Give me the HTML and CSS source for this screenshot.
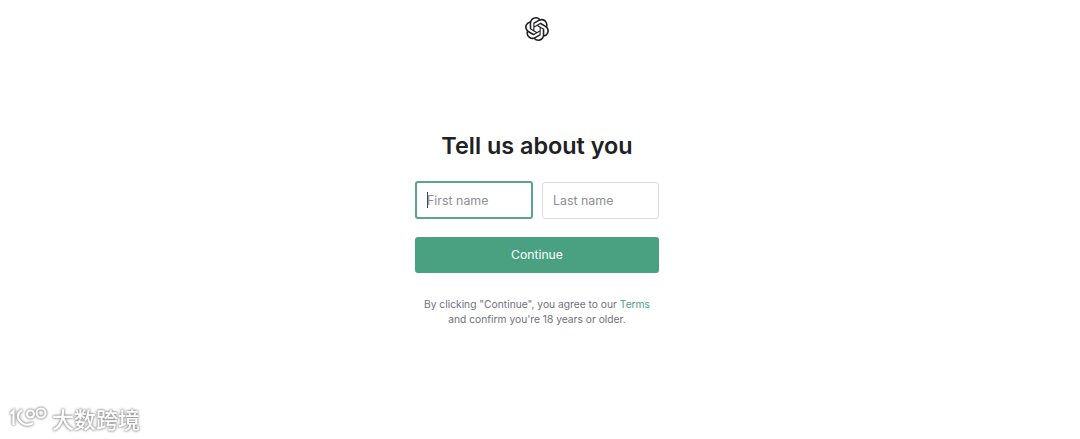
FILE: index.html
```html
<!DOCTYPE html>
<html lang="en">
<head>
<meta charset="utf-8">
<title>Tell us about you</title>
<link rel="stylesheet" href="styles.css">
</head>
<body>
<main class="page">
  <svg class="logo" viewBox="0 0 24 24" aria-label="OpenAI"><path d="M22.2819 9.8211a5.9847 5.9847 0 0 0-.5157-4.9108 6.0462 6.0462 0 0 0-6.5098-2.9A6.0651 6.0651 0 0 0 4.9807 4.1818a5.9847 5.9847 0 0 0-3.9977 2.9 6.0462 6.0462 0 0 0 .7427 7.0966 5.98 5.98 0 0 0 .511 4.9107 6.051 6.051 0 0 0 6.5146 2.9001A5.9847 5.9847 0 0 0 13.2599 24a6.0557 6.0557 0 0 0 5.7718-4.2058 5.9894 5.9894 0 0 0 3.9977-2.9001 6.0557 6.0557 0 0 0-.7475-7.0729zm-9.022 12.6081a4.4755 4.4755 0 0 1-2.8764-1.0408l.1419-.0804 4.7783-2.7582a.7948.7948 0 0 0 .3927-.6813v-6.7369l2.02 1.1686a.071.071 0 0 1 .038.052v5.5826a4.504 4.504 0 0 1-4.4945 4.4944zm-9.6607-4.1254a4.4708 4.4708 0 0 1-.5346-3.0137l.142.0852 4.783 2.7582a.7712.7712 0 0 0 .7806 0l5.8428-3.3685v2.3324a.0804.0804 0 0 1-.0332.0615L9.74 19.9502a4.4992 4.4992 0 0 1-6.1408-1.6464zM2.3408 7.8956a4.485 4.485 0 0 1 2.3655-1.9728V11.6a.7664.7664 0 0 0 .3879.6765l5.8144 3.3543-2.0201 1.1685a.0757.0757 0 0 1-.071 0l-4.8303-2.7865A4.504 4.504 0 0 1 2.3408 7.872zm16.5963 3.8558L13.1038 8.364 15.1192 7.2a.0757.0757 0 0 1 .071 0l4.8303 2.7913a4.4944 4.4944 0 0 1-.6765 8.1042v-5.6772a.79.79 0 0 0-.407-.667zm2.0107-3.0231l-.142-.0852-4.7735-2.7818a.7759.7759 0 0 0-.7854 0L9.409 9.2297V6.8974a.0662.0662 0 0 1 .0284-.0615l4.8303-2.7866a4.4992 4.4992 0 0 1 6.6802 4.66zM8.3065 12.863l-2.02-1.1638a.0804.0804 0 0 1-.038-.0567V6.0742a4.4992 4.4992 0 0 1 7.3757-3.4537l-.142.0805L8.704 5.459a.7948.7948 0 0 0-.3927.6813zm1.0976-2.3654l2.602-1.4998 2.6069 1.4998v2.9994l-2.5974 1.4997-2.6067-1.4997Z"/></svg>
  <section class="card">
    <h1 class="title">Tell us about you</h1>
    <div class="fields">
      <div class="field field-active"><span class="caret"></span><span class="placeholder">First name</span></div>
      <div class="field"><span class="placeholder">Last name</span></div>
    </div>
    <button class="continue" type="button">Continue</button>
    <p class="terms">By clicking "Continue", you agree to our <a class="terms-link">Terms</a><br>and confirm you're 18 years or older.</p>
  </section>
</main>
<div class="watermark">
  <svg class="mark" viewBox="0 0 40 26" aria-hidden="true">
    <path d="M1.5 9 L4.5 6 V20"/>
    <path d="M13 5 C8 8 8 13 11 16 C14 20 19 21 24 18"/>
    <circle cx="21.5" cy="9" r="3.5"/><circle cx="32" cy="8" r="4.5"/>
  </svg>
  <span class="mark-text">大数跨境</span>
</div>
</body>
</html>
```

FILE: styles.css
```css
* { box-sizing: border-box; }
html, body { margin: 0; height: 100%; background: #fff; overflow: hidden; }
body { font-family: Inter, "Noto Sans", "Liberation Sans", sans-serif; color: #202123; }
.page { display: flex; flex-direction: column; align-items: center; padding-right: 6px; }
.logo { width: 24px; height: 24px; margin-top: 17px; fill: #202123; }
.card { width: 244px; margin-top: 89px; display: flex; flex-direction: column; }
.title { margin: 0; font-size: 23.4px; line-height: 32px; font-weight: 600; text-align: center; white-space: nowrap; }
.fields { display: flex; gap: 9px; margin-top: 19px; }
.field { flex: 1; height: 37px; margin-top: 1px; border: 1px solid #dadce0; border-radius: 3px; display: flex; align-items: center; padding: 0 0 1px 10px; font-size: 12.4px; }
.field-active { flex: 0 0 118px; height: 38px; margin-top: 0; border: 2px solid #5aa58c; padding: 0 0 0 10px; }
.caret { width: 1px; height: 16px; background: #40414f; margin-right: -1px; }
.placeholder { color: #8e8e98; }
.continue { height: 36px; margin-top: 18px; border: 0; border-radius: 3px; background: #4aa181; color: #fff; font: inherit; font-size: 12.2px; padding: 0 0 1px; }
.terms { margin: 24px 0 0; font-size: 10.25px; line-height: 15px; text-align: center; color: #71717a; white-space: nowrap; }
.terms-link { color: #4aa181; }
.watermark { position: absolute; left: 9px; top: 405px; display: flex; align-items: center; gap: 3px; filter: drop-shadow(0 0 1px #8a8a8a) drop-shadow(0 0 1px #b0b0b0); }
.mark { width: 40px; height: 26px; fill: none; stroke: #fff; stroke-width: 2.2; }
.mark-text { font-family: "Noto Sans CJK SC", sans-serif; font-size: 22px; line-height: 26px; font-weight: 500; color: #fff; }
```
